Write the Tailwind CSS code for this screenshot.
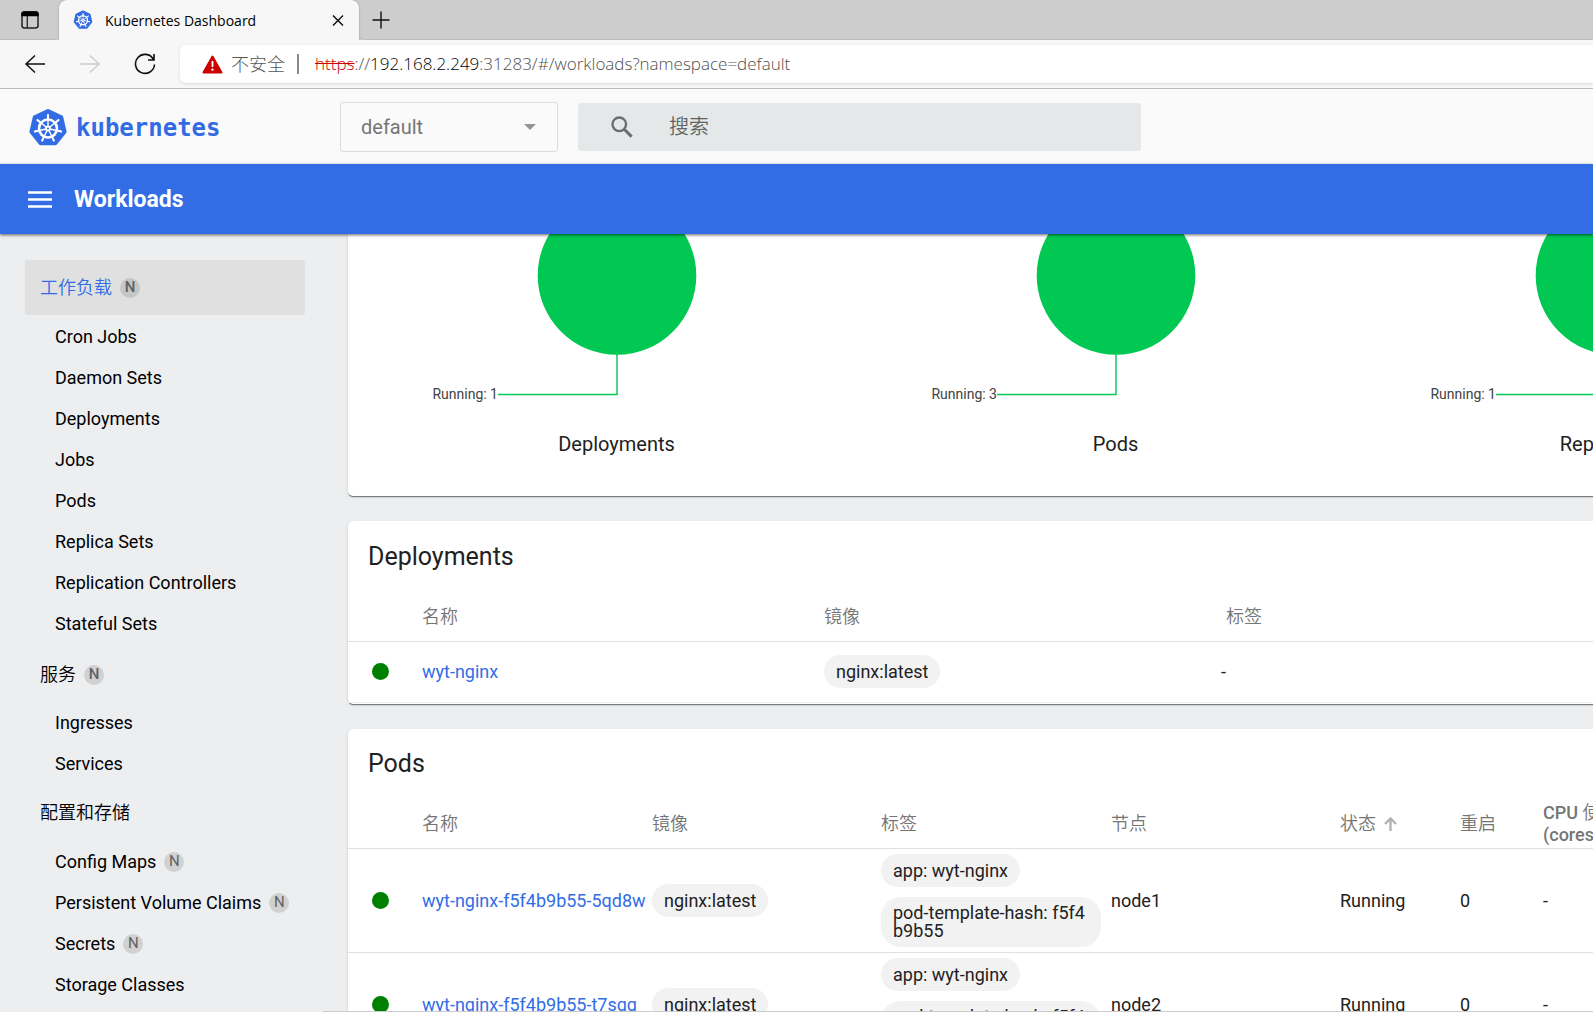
<!DOCTYPE html>
<html lang="zh-CN">
<head>
<meta charset="utf-8">
<title>Kubernetes Dashboard</title>
<script src="https://cdn.jsdelivr.net/npm/@tailwindcss/browser@4"></script>
</head>
<body class="flex h-screen flex-col overflow-hidden bg-[#eceef0] font-[Roboto,'Noto_Sans_CJK_SC',sans-serif] text-[#212121]">

<!-- Shared logo symbol -->
<svg width="0" height="0" class="absolute" aria-hidden="true">
  <defs>
    <g id="spoke"><path d="M20 18V6.500" stroke="#fff" stroke-width="1.400" stroke-linecap="round"/><path d="M20 9V6.500" stroke="#fff" stroke-width="2" stroke-linecap="round"/></g>
    <symbol id="k8s" viewBox="0 0 40 40">
      <path d="M20 3 33.290 9.400 36.570 23.780 27.380 35.320H12.620L3.430 23.780 6.710 9.400Z" fill="#326ce5" stroke="#326ce5" stroke-width="4" stroke-linejoin="round"/>
      <circle cx="20" cy="20.500" r="9" fill="none" stroke="#fff" stroke-width="2.600"/>
      <g transform="translate(0 .5)">
        <use href="#spoke"/>
        <use href="#spoke" transform="rotate(51.43 20 20)"/>
        <use href="#spoke" transform="rotate(102.86 20 20)"/>
        <use href="#spoke" transform="rotate(154.29 20 20)"/>
        <use href="#spoke" transform="rotate(205.71 20 20)"/>
        <use href="#spoke" transform="rotate(257.14 20 20)"/>
        <use href="#spoke" transform="rotate(308.57 20 20)"/>
        <circle cx="20" cy="20" r="3" fill="#fff"/>
        <circle cx="20" cy="20" r="1" fill="#326ce5"/>
      </g>
    </symbol>
  </defs>
</svg>

<!-- Browser tab strip -->
<div class="flex h-10 shrink-0 bg-[#cdcdcd] font-['Open_Sans','Noto_Sans_CJK_SC',sans-serif]">
  <div class="flex w-[59px] items-center rounded-br-md border-b border-[#bbb] pl-5">
    <button aria-label="Tab actions"><svg width="20" height="20" viewBox="0 0 20 20" fill="none"><rect x="2" y="2" width="16" height="16" rx="2.500" stroke="#222" stroke-width="1.500"/><path d="M1.300 6.200V4Q1.300 1.300 4 1.300H16Q18.700 1.300 18.700 4V6.200Z" fill="#000"/><path d="M7.300 6V18" stroke="#222" stroke-width="1.300"/></svg></button>
  </div>
  <div class="flex w-[300px] items-center rounded-t-lg bg-[#f7f7f7] pl-3.5 pr-3 shadow-[0_0_2px_rgba(0,0,0,0.3)]">
    <svg class="size-5" aria-hidden="true"><use href="#k8s"/></svg>
    <span class="ml-3 flex-1 whitespace-nowrap text-[14px] text-black">Kubernetes Dashboard</span>
    <button aria-label="Close tab"><svg width="18" height="18" viewBox="0 0 18 18" stroke="#111" stroke-width="1.500" fill="none"><path d="M4 4.500 14 14.500M14 4.500 4 14.500"/></svg></button>
  </div>
  <div class="flex flex-1 items-center rounded-bl-md border-b border-[#bbb] pl-3">
    <button aria-label="New tab"><svg width="20" height="20" viewBox="0 0 20 20" stroke="#111" stroke-width="1.400" fill="none"><path d="M10 1.500V18.500M1.500 10H18.500"/></svg></button>
  </div>
</div>

<!-- Address bar -->
<div class="relative flex h-[49px] shrink-0 items-center border-b border-[#bbb] bg-[#f7f7f7] font-['Open_Sans','Noto_Sans_CJK_SC',sans-serif]">
  <div class="flex w-[180px] items-center gap-[33px] pl-6">
    <button aria-label="Back"><svg width="22" height="20" viewBox="0 0 22 20" stroke="#111" stroke-width="1.500" fill="none"><path d="M21 10H2M11 1.500 2 10l9 8.500"/></svg></button>
    <button aria-label="Forward" disabled><svg width="22" height="20" viewBox="0 0 22 20" stroke="#ccc" stroke-width="1.500" fill="none"><path d="M1 10H20M11 1.500 20 10l-9 8.500"/></svg></button>
    <button aria-label="Refresh"><svg width="22" height="22" viewBox="0 0 22 22" stroke="#111" stroke-width="1.600" fill="none"><path d="M19.300 6.200A9.500 9.500 0 1 0 20.500 11.500M20 1V7H14"/></svg></button>
  </div>
  <div class="flex h-[38px] flex-1 items-center rounded-l-md bg-white pl-[22px] shadow-[0_1px_3px_rgba(0,0,0,0.12)]">
    <svg width="21" height="19" viewBox="0 0 21 19" aria-hidden="true"><path d="M10.500 1.500 19.500 17.500H1.500Z" fill="#c00" stroke="#c00" stroke-width="2" stroke-linejoin="round"/><path d="M10.500 6V12" stroke="#fff" stroke-width="1.800"/><circle cx="10.500" cy="14.600" r="1.200" fill="#fff"/></svg>
    <span class="ml-2 text-[18px] font-light text-[#555]">不安全</span>
    <span class="ml-3 h-5 w-0.5 bg-[#888]"></span>
    <p class="ml-4 whitespace-nowrap text-[17px] font-light text-[#505050]"><span class="text-[#c00] line-through">https</span>://<span class="text-black">192.168.2.249</span>:31283/#/workloads?namespace=default</p>
  </div>
</div>

<!-- Dashboard header -->
<header class="flex h-[75px] shrink-0 items-center bg-[#fafafa]">
  <a href="#" class="flex w-[340px] items-center pl-7 pt-0.5 font-['DejaVu_Sans_Mono',monospace] text-[24px] font-bold text-[#326ce5]">
    <svg class="mr-2 size-10" aria-hidden="true"><use href="#k8s"/></svg>kubernetes
  </a>
  <div class="relative">
    <select aria-label="Namespace" class="h-[50px] w-[218px] appearance-none rounded-[3px] border border-[#dcdcdc] pl-5 text-[20px] text-[#757575]"><option>default</option></select>
    <svg class="pointer-events-none absolute right-[22px] top-[22px]" width="12" height="6" viewBox="0 0 12 6" aria-hidden="true"><path d="M0 0H12L6 6Z" fill="#949494"/></svg>
  </div>
  <form class="ml-5 flex h-12 w-[563px] items-center rounded-[3px] bg-[#e4e8e9] pl-[33px]">
    <svg width="22" height="22" viewBox="0 0 22 22" fill="none" stroke="#6b6e6e" aria-hidden="true"><circle cx="8.300" cy="8.300" r="6.800" stroke-width="2.400"/><path d="M13.200 13.200 20.600 20.600" stroke-width="3"/></svg>
    <input type="text" aria-label="搜索" placeholder="搜索" class="ml-9 min-w-0 flex-1 text-[20px] font-[350] placeholder:text-[#606464]">
  </form>
</header>

<div class="relative z-10 flex h-[70px] shrink-0 items-center bg-[#326de6] pl-7 text-white shadow-[0_1px_3px_rgba(0,0,0,0.6)]">
  <button aria-label="Menu"><svg width="24" height="18" viewBox="0 0 24 18" stroke="#fff" stroke-width="2.600"><path d="M0 2.500H24M0 9.500H24M0 16.500H24"/></svg></button>
  <h1 class="ml-[22px] pt-0.5 text-[23px] font-bold">Workloads</h1>
</div>

<div class="flex min-h-0 flex-1">
  <!-- Side navigation -->
  <nav class="w-[323px] shrink-0 overflow-hidden pl-[25px] pr-[18px] pt-[26px] text-[18px] text-black">
    <a href="#" class="mb-px flex h-[55px] items-center rounded-[3px] bg-[#e0e0e0] pl-[15px] font-[350] text-[#326de6]">工作负载<span class="ml-2 flex size-5 items-center justify-center rounded-full bg-[#c6c6c6] text-[15px] font-medium text-[#616161]">N</span></a>
    <ul class="pb-[3px] pl-[30px]">
      <li class="flex h-[41px] items-center"><a href="#">Cron Jobs</a></li>
      <li class="flex h-[41px] items-center"><a href="#">Daemon Sets</a></li>
      <li class="flex h-[41px] items-center"><a href="#">Deployments</a></li>
      <li class="flex h-[41px] items-center"><a href="#">Jobs</a></li>
      <li class="flex h-[41px] items-center"><a href="#">Pods</a></li>
      <li class="flex h-[41px] items-center"><a href="#">Replica Sets</a></li>
      <li class="flex h-[41px] items-center"><a href="#">Replication Controllers</a></li>
      <li class="flex h-[41px] items-center"><a href="#">Stateful Sets</a></li>
    </ul>
    <a href="#" class="flex h-[55px] items-center pl-[15px] font-[350]">服务<span class="ml-2 flex size-5 items-center justify-center rounded-full bg-[#d1d1d1] text-[15px] font-medium text-[#616161]">N</span></a>
    <ul class="pb-px pl-[30px]">
      <li class="flex h-[41px] items-center"><a href="#">Ingresses</a></li>
      <li class="flex h-[41px] items-center"><a href="#">Services</a></li>
    </ul>
    <a href="#" class="mb-px flex h-[55px] items-center pl-[15px] font-[350]">配置和存储</a>
    <ul class="pl-[30px]">
      <li class="flex h-[41px] items-center"><a href="#">Config Maps</a><span class="ml-2 flex size-5 items-center justify-center rounded-full bg-[#d1d1d1] text-[15px] text-[#616161]">N</span></li>
      <li class="flex h-[41px] items-center"><a href="#">Persistent Volume Claims</a><span class="ml-2 flex size-5 items-center justify-center rounded-full bg-[#d1d1d1] text-[15px] text-[#616161]">N</span></li>
      <li class="flex h-[41px] items-center"><a href="#">Secrets</a><span class="ml-2 flex size-5 items-center justify-center rounded-full bg-[#d1d1d1] text-[15px] text-[#616161]">N</span></li>
      <li class="flex h-[41px] items-center"><a href="#">Storage Classes</a></li>
    </ul>
  </nav>

  <main class="min-w-0 flex-1 overflow-hidden border-b border-[#ccc] pl-[25px] text-[18px]">
    <div class="flex min-w-[1535px] flex-col gap-[25px]">
      <!-- Status charts -->
      <section class="flex h-[262px] rounded-b-[5px] bg-white px-[19px] shadow-[0_2px_1px_-1px_rgba(0,0,0,0.4),0_1px_1px_rgba(0,0,0,0.14),0_1px_3px_rgba(0,0,0,0.12)]">
        <figure class="flex flex-1 flex-col items-center">
          <svg width="498" height="190" viewBox="1 0 498 190"><circle cx="250" cy="41.500" r="79.300" fill="#00c853"/><path d="M250 120V160.500H131" fill="none" stroke="#00c853" stroke-width="1.400"/><text x="131" y="165" text-anchor="end" font-size="14" fill="#424242">Running: 1</text></svg>
          <figcaption class="mt-1.5 text-[20px] leading-7">Deployments</figcaption>
        </figure>
        <figure class="flex flex-1 flex-col items-center">
          <svg width="498" height="190" viewBox="1 0 498 190"><circle cx="250" cy="41.500" r="79.300" fill="#00c853"/><path d="M250 120V160.500H131" fill="none" stroke="#00c853" stroke-width="1.400"/><text x="131" y="165" text-anchor="end" font-size="14" fill="#424242">Running: 3</text></svg>
          <figcaption class="mt-1.5 text-[20px] leading-7">Pods</figcaption>
        </figure>
        <figure class="flex flex-1 flex-col items-center">
          <svg width="498" height="190" viewBox="1 0 498 190"><circle cx="250" cy="41.500" r="79.300" fill="#00c853"/><path d="M250 120V160.500H131" fill="none" stroke="#00c853" stroke-width="1.400"/><text x="131" y="165" text-anchor="end" font-size="14" fill="#424242">Running: 1</text></svg>
          <figcaption class="mt-1.5 text-[20px] leading-7">Replica Sets</figcaption>
        </figure>
      </section>

      <!-- Deployments -->
      <section class="rounded-[5px] bg-white pb-px shadow-[0_2px_1px_-1px_rgba(0,0,0,0.4),0_1px_1px_rgba(0,0,0,0.14),0_1px_3px_rgba(0,0,0,0.12)]">
        <h2 class="flex h-[71px] items-center pl-5 text-[25px]">Deployments</h2>
        <table class="w-full table-fixed text-left">
          <colgroup><col class="w-[74px]"><col class="w-[402px]"><col class="w-[402px]"><col></colgroup>
          <thead>
            <tr class="h-[49px] border-b border-[#e0e0e0] text-[#757575]"><th></th><th class="font-[350]">名称</th><th class="font-[350]">镜像</th><th class="font-[350]">标签</th></tr>
          </thead>
          <tbody>
            <tr class="h-[61px] border-b border-[#eeeeee]">
              <td class="pl-6"><span class="block size-[17px] rounded-full bg-[#008000]"></span></td>
              <td><a href="#" class="text-[#326de6]">wyt-nginx</a></td>
              <td><span class="flex min-h-[33px] w-fit items-center rounded-[17px] bg-[#f2f2f2] px-3 leading-[18px]">nginx:latest</span></td>
              <td><span class="-ml-[5px]">-</span></td>
            </tr>
          </tbody>
        </table>
      </section>

      <!-- Pods -->
      <section class="rounded-[5px] bg-white shadow-[0_2px_1px_-1px_rgba(0,0,0,0.4),0_1px_1px_rgba(0,0,0,0.14),0_1px_3px_rgba(0,0,0,0.12)]">
        <h2 class="flex h-[71px] items-center pl-5 text-[25px]">Pods</h2>
        <table class="w-full table-fixed text-left">
          <colgroup><col class="w-[74px]"><col class="w-[230px]"><col class="w-[229px]"><col class="w-[230px]"><col class="w-[229px]"><col class="w-[120px]"><col class="w-[83px]"><col></colgroup>
          <thead>
            <tr class="h-[49px] border-b border-[#e0e0e0] text-[#757575]">
              <th></th><th class="font-[350]">名称</th><th class="font-[350]">镜像</th><th class="font-[350]">标签</th><th class="font-[350]">节点</th>
              <th class="font-[350]"><span class="flex items-center gap-2">状态<svg width="13" height="16" viewBox="0 0 13 16" fill="none" stroke="#b3b3b3" stroke-width="2.400" aria-label="升序"><path d="M6.500 15V2M1 8 6.500 2.500 12 8"/></svg></span></th>
              <th class="font-[350]">重启</th>
              <th class="py-0 font-medium leading-[22px]">CPU <span class="font-[350]">使用率</span><br>(cores)</th>
            </tr>
          </thead>
          <tbody>
            <tr class="h-[104px] border-b border-[#e0e0e0]">
              <td class="pl-6"><span class="block size-[17px] rounded-full bg-[#008000]"></span></td>
              <td class="whitespace-nowrap"><a href="#" class="text-[#326de6]">wyt-nginx-f5f4b9b55-5qd8w</a></td>
              <td><span class="flex min-h-[33px] w-fit items-center rounded-[17px] bg-[#f2f2f2] px-3 leading-[18px]">nginx:latest</span></td>
              <td><div class="flex flex-col items-start gap-2.5"><span class="flex min-h-[33px] w-fit items-center rounded-[17px] bg-[#f2f2f2] px-3 leading-[18px]">app: wyt-nginx</span><span class="w-[220px] break-all rounded-[20px] bg-[#f2f2f2] px-3 py-[7px] leading-[18px]">pod-template-hash: f5f4b9b55</span></div></td>
              <td>node1</td><td>Running</td><td>0</td><td>-</td>
            </tr>
            <tr class="h-[104px] border-b border-[#e0e0e0]">
              <td class="pl-6"><span class="block size-[17px] rounded-full bg-[#008000]"></span></td>
              <td class="whitespace-nowrap"><a href="#" class="text-[#326de6]">wyt-nginx-f5f4b9b55-t7sgg</a></td>
              <td><span class="flex min-h-[33px] w-fit items-center rounded-[17px] bg-[#f2f2f2] px-3 leading-[18px]">nginx:latest</span></td>
              <td><div class="flex flex-col items-start gap-2.5"><span class="flex min-h-[33px] w-fit items-center rounded-[17px] bg-[#f2f2f2] px-3 leading-[18px]">app: wyt-nginx</span><span class="w-[220px] break-all rounded-[20px] bg-[#f2f2f2] px-3 py-[7px] leading-[18px]">pod-template-hash: f5f4b9b55</span></div></td>
              <td>node2</td><td>Running</td><td>0</td><td>-</td>
            </tr>
          </tbody>
        </table>
      </section>
    </div>
  </main>
</div>
</body>
</html>
